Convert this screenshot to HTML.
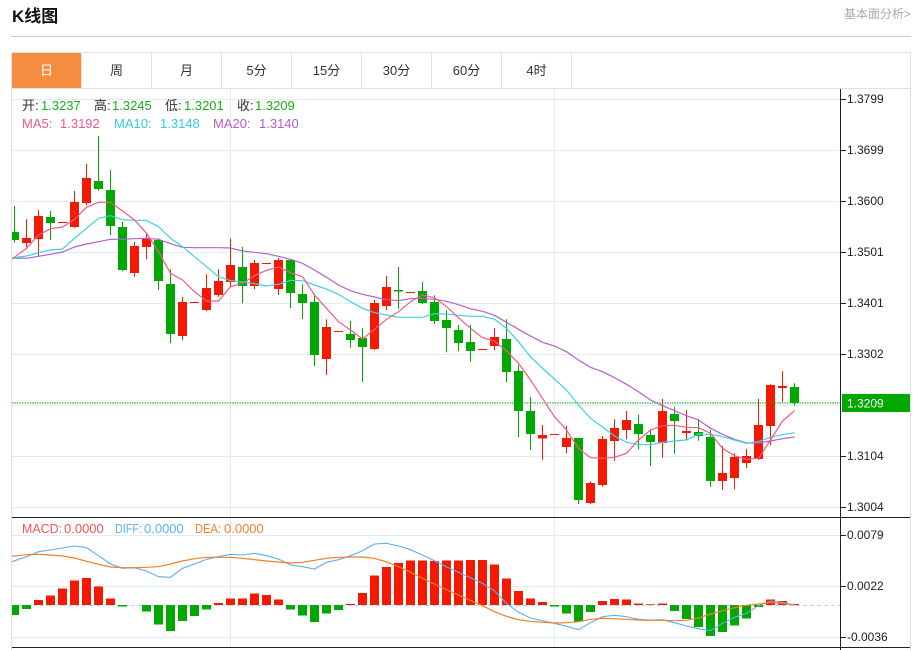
<!DOCTYPE html>
<html lang="zh"><head><meta charset="utf-8"><title>K线图</title>
<style>
html,body{margin:0;padding:0;background:#fff;width:919px;height:650px;overflow:hidden}
svg{display:block;font-family:"Liberation Sans","Noto Sans CJK SC",sans-serif}
text{white-space:pre}
</style></head><body>
<svg width="919" height="650" viewBox="0 0 919 650" xmlns="http://www.w3.org/2000/svg">
<defs><clipPath id="c"><rect x="12" y="89" width="828" height="428"/></clipPath></defs>
<text x="12" y="22" font-size="17" font-weight="700" fill="#111">K线图</text>
<text x="844" y="18" font-size="12" fill="#a8a8a8">基本面分析&gt;</text>
<path d="M11 36.5H911" stroke="#ccc" fill="none"/>
<path d="M11.5 52.5H910.5M11 88.5H910.5M11.5 52V650M910.5 52V650M81.5 52V88M151.5 52V88M221.5 52V88M291.5 52V88M361.5 52V88M431.5 52V88M501.5 52V88M571.5 52V88" stroke="#dce1e6" fill="none"/>
<rect x="12" y="53" width="69" height="35" rx="1" fill="#f58c3f"/>
<g font-size="13" text-anchor="middle" fill="#333">
<text x="46.5" y="75" fill="#fff">日</text><text x="116.5" y="75">周</text><text x="186.5" y="75">月</text><text x="256.5" y="75">5分</text><text x="326.5" y="75">15分</text><text x="396.5" y="75">30分</text><text x="466.5" y="75">60分</text><text x="536.5" y="75">4时</text>
</g>
<!-- grid -->
<path d="M12 99.5H840M12 150.5H840M12 201.5H840M12 252.5H840M12 303.5H840M12 354.5H840M12 405.5H840M12 456.5H840M12 507.5H840M12 535.5H840M12 586.5H840M12 637.5H840M230.5 89V648M554.5 89V648" stroke="#e3ecf3" fill="none"/>
<g clip-path="url(#c)">
<path fill="none" stroke="#00a800" d="M14.5 206V242.7M50.5 211V240M98.5 136V191M110.5 170V235M122.5 222V271.3M158.5 238.3V290M170.5 269.3V343M242.5 247V303.3M290.5 260V308M302.5 284.3V319M314.5 294.3V366M350.5 321V347.7M362.5 328.3V381.7M398.5 267V308.7M422.5 282V304M434.5 295.3V324M446.5 310.3V352.3M458.5 325V351M470.5 325V361.7M506.5 319.3V382M518.5 365V437.3M530.5 397V449.7M578.5 438V504M638.5 414.7V449.3M650.5 429.3V466M674.5 406.7V453.7M698.5 418.7V440.7M710.5 430V486.7M794.5 383.3V405.7"/>
<path fill="none" stroke="#f41900" d="M26.5 219.3V247.3M38.5 210V256M74.5 191V227.7M86.5 164V205.3M134.5 242V276.7M146.5 234V259.3M182.5 297V340.3M206.5 274.3V311M218.5 269.3V297M230.5 238.3V286M254.5 260V289M278.5 258V295M326.5 319.3V375M374.5 300V350M386.5 276V310.3M494.5 328V350M542.5 425V459.7M566.5 426V453.3M590.5 481.3V504M602.5 436V486.7M614.5 419.3V460.7M626.5 411V439.3M662.5 399V457.7M686.5 410V440M722.5 446V490M734.5 453.3V489.3M746.5 449V468M758.5 399V460M770.5 384.3V445.3M782.5 371.3V401.7"/>
<path fill="#00a800" d="M10 232h9v8h-9zM46 217h9v6h-9zM94 181h9v8h-9zM106 190h9v36h-9zM118 227h9v43h-9zM154 240h9v41h-9zM166 284h9v50h-9zM238 267h9v19h-9zM286 260h9v33h-9zM298 294h9v9h-9zM310 302h9v53h-9zM346 334h9v6h-9zM358 338h9v9h-9zM394 290h9v1.5h-9zM418 291h9v12h-9zM430 302h9v19h-9zM442 320h9v8h-9zM454 330h9v13h-9zM466 342h9v9h-9zM502 339h9v33h-9zM514 371h9v40h-9zM526 411h9v23h-9zM574 438h9v62h-9zM634 424h9v10h-9zM646 435h9v7h-9zM670 414h9v7h-9zM694 432h9v4h-9zM706 437h9v44h-9zM790 387h9v16h-9z"/>
<path fill="#f41900" d="M22 238h9v5h-9zM34 216h9v23h-9zM58 222h9v1h-9zM70 202h9v25h-9zM82 178h9v25h-9zM130 246h9v27h-9zM142 239h9v8h-9zM178 302h9v34h-9zM190 302h9v1h-9zM202 288h9v22h-9zM214 281h9v14h-9zM226 265h9v17h-9zM250 263h9v23h-9zM262 263h9v1h-9zM274 260h9v29h-9zM322 327h9v32h-9zM334 331h9v1h-9zM370 303h9v46h-9zM382 287h9v19h-9zM406 292h9v1h-9zM478 349h9v1h-9zM490 337h9v9h-9zM538 435h9v3.5h-9zM550 434h9v1h-9zM562 438h9v9h-9zM586 483h9v20h-9zM598 439h9v46h-9zM610 428h9v13h-9zM622 420h9v10h-9zM658 411h9v32h-9zM682 431h9v2h-9zM718 473h9v8h-9zM730 457h9v21h-9zM742 456h9v7h-9zM754 425h9v34h-9zM766 385h9v41h-9zM778 386h9v2h-9z"/>
<path d="M12 403H840" stroke="#00a800" stroke-dasharray="1.5 1" stroke-width="2" opacity=".5" fill="none"/>
<polyline fill="none" stroke="#b660c9" stroke-width="1.2" points="12,258 26.5,258.3 38.5,256.3 50.5,254.3 62.5,252 74.5,247 86.5,244 98.5,241.7 110.5,239.3 122.5,239.3 134.5,238.7 146.5,238.3 158.5,239.3 170.5,243.7 182.5,247.3 194.5,247.7 206.5,247.7 218.5,247.7 230.5,248 242.5,251 254.5,252.3 266.5,253.7 278.5,256.3 290.5,259.3 302.5,263.3 314.5,270 326.5,277.3 338.5,285 350.5,290.7 362.5,294.3 374.5,297 386.5,299.7 398.5,300.7 410.5,298.7 422.5,298.3 434.5,299.3 446.5,301.3 458.5,304.7 470.5,308.7 482.5,311.3 494.5,315.3 506.5,322.3 518.5,329.3 530.5,336 542.5,342.3 554.5,346 566.5,351.7 578.5,360 590.5,367.3 602.5,371.7 614.5,377.7 626.5,384.3 638.5,391.7 650.5,400 662.5,405.7 674.5,410.7 686.5,415.7 698.5,420 710.5,428.3 722.5,434.3 734.5,439.3 746.5,443 758.5,443 770.5,441 782.5,438.7 794.5,437"/>
<polyline fill="none" stroke="#3fd0e4" stroke-width="1.2" points="12,258 26.5,256 38.5,252.7 50.5,250 62.5,249 74.5,238.3 86.5,228.3 98.5,218.3 110.5,215.7 122.5,219.7 134.5,220.3 146.5,220.3 158.5,226.7 170.5,238.3 182.5,246.7 194.5,256.7 206.5,266.7 218.5,276.7 230.5,280.7 242.5,282 254.5,283.7 266.5,286 278.5,284.3 290.5,280.3 302.5,280.7 314.5,285 326.5,289 338.5,294.3 350.5,301.7 362.5,308.3 374.5,312.7 386.5,315 398.5,317.3 410.5,317.3 422.5,317.3 434.5,313.7 446.5,314 458.5,315.3 470.5,316.3 482.5,316.3 494.5,319.3 506.5,328.3 518.5,341.7 530.5,356.7 542.5,368.3 554.5,379 566.5,390 578.5,405 590.5,418.3 602.5,427 614.5,436 626.5,442.3 638.5,444.7 650.5,444.7 662.5,442.3 674.5,441 686.5,440 698.5,434 710.5,434.3 722.5,436.7 734.5,440 746.5,443.3 758.5,441.7 770.5,437.3 782.5,434.7 794.5,432.7"/>
<polyline fill="none" stroke="#f5588c" stroke-width="1.2" points="12,259 26.5,248.3 38.5,235 50.5,228.7 62.5,227 74.5,219.3 86.5,207.3 98.5,202.3 110.5,202.3 122.5,211 134.5,220 146.5,233.3 158.5,251.7 170.5,273.3 182.5,280 194.5,291.7 206.5,301 218.5,301 230.5,286.7 242.5,283.3 254.5,275.7 266.5,270.3 278.5,267 290.5,272.7 302.5,276.7 314.5,295 326.5,308.3 338.5,321.7 350.5,330 362.5,339 374.5,329.3 386.5,319.3 398.5,311.7 410.5,301.7 422.5,295 434.5,297.7 446.5,306.7 458.5,317.7 470.5,328.3 482.5,337.7 494.5,341 506.5,351 518.5,363.3 530.5,380 542.5,398.3 554.5,416.7 566.5,430 578.5,448.3 590.5,457.7 602.5,458.3 614.5,457.3 626.5,453.3 638.5,440 650.5,430 662.5,425.7 674.5,425.3 686.5,427.3 698.5,427.7 710.5,433.3 722.5,448.3 734.5,455.7 746.5,459.3 758.5,458.3 770.5,440 782.5,421 794.5,410.7"/>
</g>
<!-- macd -->
<path d="M12 605.5H840" stroke="#a9def2" stroke-dasharray="4 3" fill="none"/>
<path fill="#00a800" d="M12 605h7v10h-7zM22 605h9v4h-9zM118 605h9v1.5h-9zM142 605h9v6.5h-9zM154 605h9v19.5h-9zM166 605h9v26h-9zM178 605h9v16h-9zM190 605h9v11h-9zM202 605h9v4.5h-9zM286 605h9v4.5h-9zM298 605h9v10.5h-9zM310 605h9v17h-9zM322 605h9v8.5h-9zM334 605h9v5h-9zM550 605h9v1.5h-9zM562 605h9v8.5h-9zM574 605h9v16.5h-9zM586 605h9v7h-9zM670 605h9v6h-9zM682 605h9v14h-9zM694 605h9v22h-9zM706 605h9v31h-9zM718 605h9v27h-9zM730 605h9v20.5h-9zM742 605h9v13.5h-9zM754 605h9v2h-9z"/>
<path fill="#f41900" d="M34 600h9v5h-9zM46 595.5h9v9.5h-9zM58 588.5h9v16.5h-9zM70 580.5h9v24.5h-9zM82 578h9v27h-9zM94 586.5h9v18.5h-9zM106 598.5h9v6.5h-9zM214 603h9v2h-9zM226 598.5h9v6.5h-9zM238 598.5h9v6.5h-9zM250 593.5h9v11.5h-9zM262 595h9v10h-9zM274 599.5h9v5.5h-9zM346 604h9v1h-9zM358 593h9v12h-9zM370 575.5h9v29.5h-9zM382 567h9v38h-9zM394 563h9v42h-9zM406 560.5h9v44.5h-9zM418 560.5h9v44.5h-9zM430 561h9v44h-9zM442 560.5h9v44.5h-9zM454 560.5h9v44.5h-9zM466 560h9v45h-9zM478 560h9v45h-9zM490 564.5h9v40.5h-9zM502 578.5h9v26.5h-9zM514 591h9v14h-9zM526 598.5h9v6.5h-9zM538 602h9v3h-9zM598 601h9v4h-9zM610 599h9v6h-9zM622 599.5h9v5.5h-9zM634 603.5h9v1.5h-9zM646 604.3h9v.7h-9zM658 603.5h9v1.5h-9zM766 599.5h9v5.5h-9zM778 601h9v4h-9zM790 604h9v1h-9z"/>
<polyline fill="none" stroke="#5cb0f6" stroke-width="1.1" points="12,561.7 26.5,556.7 38.5,551.7 50.5,550 62.5,548 74.5,546 86.5,547.7 98.5,555.7 110.5,564 122.5,568.3 134.5,567.7 146.5,571 158.5,576.7 170.5,577.3 182.5,568.3 194.5,564 206.5,559.3 218.5,556.7 230.5,554.3 242.5,555 254.5,553.3 266.5,555.7 278.5,559 290.5,565 302.5,566.7 314.5,569 326.5,562.3 338.5,559.7 350.5,555.7 362.5,550.7 374.5,544 386.5,543.3 398.5,546 410.5,549.7 422.5,555 434.5,560.7 446.5,566.7 458.5,572.3 470.5,577.7 482.5,583.3 494.5,591 506.5,603.3 518.5,612.3 530.5,618 542.5,620.7 554.5,623.3 566.5,626.3 578.5,629.7 590.5,622.7 602.5,616.7 614.5,615.3 626.5,616.7 638.5,619.3 650.5,620 662.5,619.7 674.5,622.7 686.5,626 698.5,628.7 710.5,630.7 722.5,623.3 734.5,617.3 746.5,613.3 758.5,605.7 770.5,601 782.5,602.3 794.5,605"/>
<polyline fill="none" stroke="#f57d22" stroke-width="1.2" points="12,556.3 26.5,554.7 38.5,554.3 50.5,555 62.5,556 74.5,558 86.5,561.3 98.5,564.3 110.5,567 122.5,567.7 134.5,567.7 146.5,567.3 158.5,566.7 170.5,564 182.5,561 194.5,558.7 206.5,557.3 218.5,557.3 230.5,557.3 242.5,558.3 254.5,559.7 266.5,561 278.5,562 290.5,563 302.5,562.3 314.5,560.3 326.5,558.3 338.5,557.3 350.5,557 362.5,557 374.5,558.3 386.5,562 398.5,566.7 410.5,572.3 422.5,578.3 434.5,584 446.5,589.7 458.5,595 470.5,600.3 482.5,605.7 494.5,611.7 506.5,616.3 518.5,619.7 530.5,621.3 542.5,622.3 554.5,623 566.5,622.7 578.5,621.7 590.5,619.3 602.5,618.3 614.5,618.7 626.5,619.3 638.5,620 650.5,620.3 662.5,620.3 674.5,620.7 686.5,620.3 698.5,618 710.5,614 722.5,610.7 734.5,607.7 746.5,605.3 758.5,604 770.5,602.7 782.5,603.3 794.5,605"/>
<!-- axes -->
<path d="M840.5 89V650M12 517.5H910M12 647.5H910M841 99.5h5M841 150.5h5M841 201.5h5M841 252.5h5M841 303.5h5M841 354.5h5M841 456.5h5M841 507.5h5M841 535.5h5M841 586.5h5M841 637.5h5" stroke="#222" fill="none"/>
<rect x="842" y="394" width="68" height="18" fill="#00a800"/>
<g font-size="12" fill="#222">
<text x="847" y="103">1.3799</text><text x="847" y="154">1.3699</text><text x="847" y="205">1.3600</text><text x="847" y="256">1.3501</text><text x="847" y="307">1.3401</text><text x="847" y="358">1.3302</text><text x="847" y="407.5" fill="#fff">1.3209</text><text x="847" y="460">1.3104</text><text x="847" y="511">1.3004</text><text x="847" y="539">0.0079</text><text x="847" y="590">0.0022</text><text x="847" y="641">-0.0036</text>
</g>
<g font-size="13">
<g fill="#333"><text x="22" y="110">开:</text><text x="94" y="110">高:</text><text x="165" y="110">低:</text><text x="237" y="110">收:</text></g>
<g fill="#16b016"><text x="41" y="110">1.3237</text><text x="112" y="110">1.3245</text><text x="184" y="110">1.3201</text><text x="255" y="110">1.3209</text></g>
<g fill="#f0568c"><text x="22" y="128">MA5:</text><text x="60" y="128">1.3192</text></g>
<g fill="#2fcde2"><text x="114" y="128">MA10:</text><text x="160" y="128">1.3148</text></g>
<g fill="#b45fc8"><text x="213" y="128">MA20:</text><text x="259" y="128">1.3140</text></g>
<g fill="#f05555"><text x="22" y="533" textLength="40" lengthAdjust="spacingAndGlyphs">MACD:</text><text x="64" y="533">0.0000</text></g>
<g fill="#5cb0f6"><text x="115" y="533" textLength="27" lengthAdjust="spacingAndGlyphs">DIFF:</text><text x="144" y="533">0.0000</text></g>
<g fill="#f58236"><text x="195" y="533" textLength="26" lengthAdjust="spacingAndGlyphs">DEA:</text><text x="224" y="533">0.0000</text></g>
</g>
</svg>
</body></html>
